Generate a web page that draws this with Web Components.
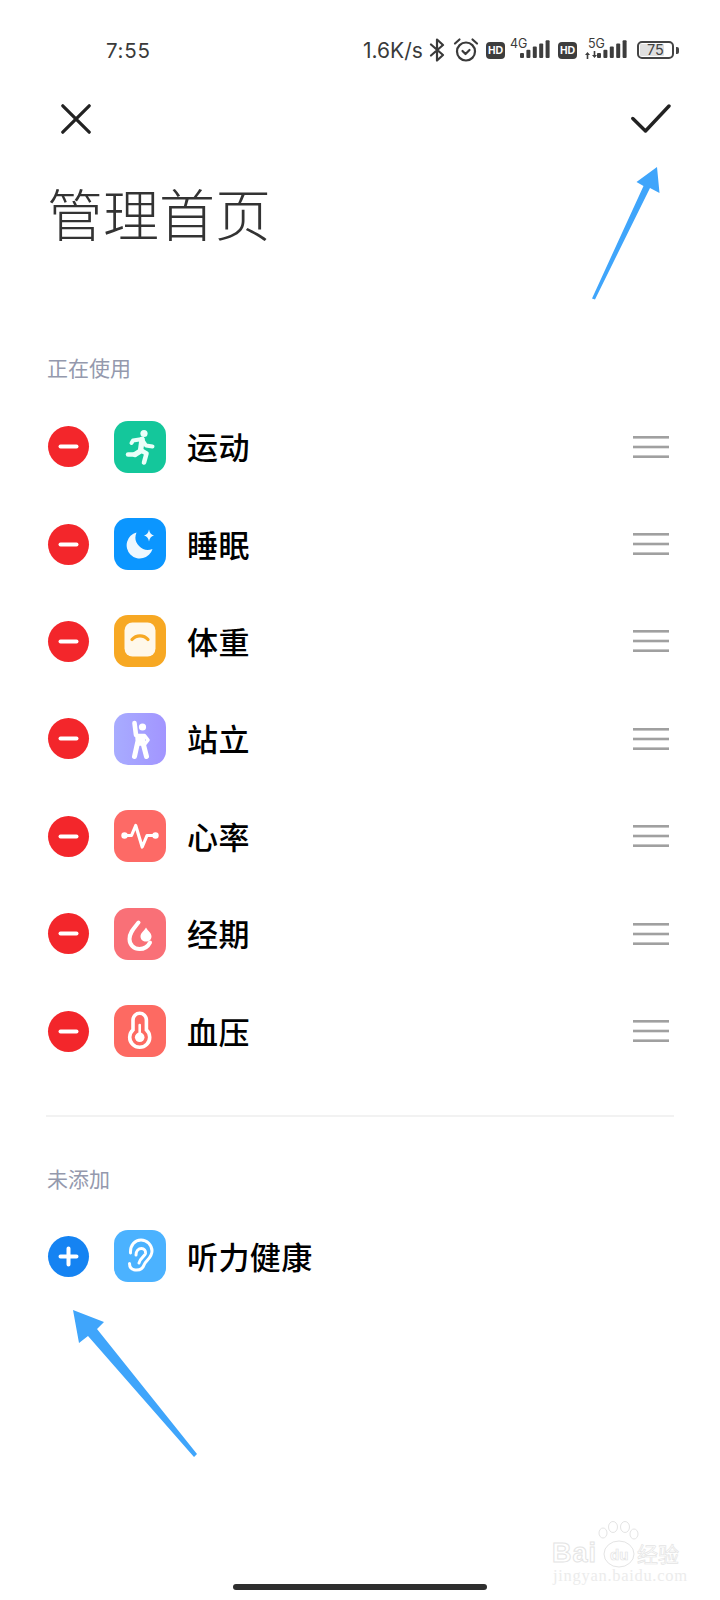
<!doctype html>
<html lang="zh">
<head>
<meta charset="utf-8">
<title>管理首页</title>
<style>
  html, body { margin: 0; padding: 0; background: #fff; }
  body { font-family: "Noto Sans CJK SC", "Noto Sans", sans-serif; }
</style>
</head>
<body>
<home-manager>
  <status-bar></status-bar>
  <nav-bar></nav-bar>
  <page-title>管理首页</page-title>
  <section-label style="--top: 70px">正在使用</section-label>
  <health-row kind="minus" icon="run">运动</health-row>
  <health-row kind="minus" icon="sleep">睡眠</health-row>
  <health-row kind="minus" icon="weight">体重</health-row>
  <health-row kind="minus" icon="stand">站立</health-row>
  <health-row kind="minus" icon="heart">心率</health-row>
  <health-row kind="minus" icon="period">经期</health-row>
  <health-row kind="minus" icon="pressure">血压</health-row>
  <list-divider></list-divider>
  <section-label style="--top: 32px">未添加</section-label>
  <health-row kind="plus" icon="ear">听力健康</health-row>
  <home-bar></home-bar>
  <note-arrows></note-arrows>
  <baidu-mark></baidu-mark>
</home-manager>

<script>
const CJK = `"Noto Sans CJK SC", "Noto Sans", sans-serif`;

const ICONS = {
  run: {
    bg: '#14c79b',
    svg: `<circle cx="30" cy="12.5" r="3.6" fill="#eafff9"/>
      <g fill="none" stroke="#eafff9" stroke-linecap="round" stroke-linejoin="round">
        <path d="M17.5 22 L19 19.5 L28.5 18 L26.5 29.5" stroke-width="4"/>
        <path d="M28 18.5 L26.5 30 L21 33.5" stroke-width="5.4"/>
        <path d="M21 33.5 L14 33.5" stroke-width="4.4"/>
        <path d="M29 20 L32 24.5 L38.5 25.5" stroke-width="4"/>
        <path d="M26.5 29 L32.5 32.5 L30 41.5" stroke-width="4.6"/>
      </g>`
  },
  sleep: {
    bg: '#0b96ff',
    svg: `<path d="M22.5 14.5 A13.2 13.2 0 1 0 38.5 31 A12.5 12.5 0 0 1 22.5 14.5 Z" fill="#eef8ff"/>
      <path d="M35 11.5 Q35.8 16.3 40 17.5 Q35.8 18.7 35 23.5 Q34.2 18.7 30 17.5 Q34.2 16.3 35 11.5 Z" fill="#eef8ff"/>`
  },
  weight: {
    bg: '#f7a823',
    svg: `<rect x="10.5" y="7.5" width="31" height="34" rx="8" fill="#fff8ea"/>
      <path d="M18 24.5 A10.5 10.5 0 0 1 34 24.5" fill="none" stroke="#f7a823" stroke-width="3.2" stroke-linecap="round"/>`
  },
  stand: {
    bg: 'linear-gradient(90deg,#a8acff,#a295ff)',
    svg: `<circle cx="28.5" cy="14" r="3.6" fill="#fff"/>
      <g fill="none" stroke="#fff" stroke-linecap="round" stroke-linejoin="round">
        <path d="M20.5 10 L22 22" stroke-width="4.6"/>
        <path d="M23 22.5 L30.5 22.5 L34 27 L30.5 31.5" stroke-width="3.6"/>
        <path d="M23 23 L29 23 L29.5 31 L23.5 31 Z" fill="#fff" stroke-width="3.6"/>
        <path d="M23.5 30 L20.5 43.5" stroke-width="5"/>
        <path d="M29 30 L32.5 43.5" stroke-width="5"/>
      </g>`
  },
  heart: {
    bg: '#fd6a66',
    svg: `<circle cx="10.5" cy="25.5" r="3.2" fill="#fff"/><circle cx="41.5" cy="25.5" r="3.2" fill="#fff"/>
      <path d="M11 25.5 H17.5 L21.7 15.5 L28.2 37 L33 25.5 H41" fill="none" stroke="#fff" stroke-width="3.2" stroke-linecap="round" stroke-linejoin="round"/>`
  },
  period: {
    bg: '#f97077',
    svg: `<path d="M24.5 14.5 C20 20 15.5 24.5 15.5 31 C15.5 37 20 41 25.5 41 C30 41 34 38.5 36 34.5" fill="none" stroke="#fff" stroke-width="4" stroke-linecap="round"/>
      <path d="M32 19.5 C34 23 37.5 25 37.5 28.5 C37.5 31.5 35 33.5 32 33.5 C29 33.5 26.5 31.5 26.5 28.5 C26.5 25 30 23 32 19.5 Z" fill="#fff"/>`
  },
  pressure: {
    bg: '#fd6a62',
    svg: `<path d="M19 15 a6.7 6.7 0 0 1 13.4 0 V24.9 A10 10 0 1 1 19 24.9 Z" fill="none" stroke="#fff" stroke-width="3.6"/>
      <circle cx="25.7" cy="32.3" r="4.8" fill="#fff"/>
      <path d="M25.7 20 V30" stroke="#fff" stroke-width="2.6" stroke-linecap="round"/>`
  },
  ear: {
    bg: '#4bb2ff',
    svg: `<g fill="none" stroke="#fff" stroke-width="3" stroke-linecap="round" stroke-linejoin="round">
        <path d="M16.5 23 C16 15 21 10 27 10 C33 10 38 15 38 21 C38 28 32 30 30 35 C28.5 39.5 25 40.5 21 40 C17.5 39.5 15.5 37 15.5 33.5"/>
        <path d="M22 25 C22 21 24.5 18.5 27.5 18.5 C30 18.5 32 20.5 31.5 23.5 C31 26 26 28 25 33"/>
      </g>`
  }
};

class HomeManager extends HTMLElement {
  connectedCallback() {
    this.attachShadow({ mode: 'open' }).innerHTML = `
      <style>
        :host { display: flex; flex-direction: column; position: relative; width: 720px; height: 1600px; overflow: hidden; background: #fff; }
      </style>
      <slot></slot>`;
  }
}

class StatusBar extends HTMLElement {
  connectedCallback() {
    const bars = [0, 1, 2, 3, 4].map(i => {
      const h = 5 + i * 3.2;
      return `<rect x="${i * 6.4}" y="${18 - h}" width="4" height="${h}" rx="1" fill="#3d3d3d"/>`;
    }).join('');
    this.attachShadow({ mode: 'open' }).innerHTML = `
      <style>
        :host { display: flex; align-items: center; box-sizing: border-box; height: 60px; margin-top: 20px; padding: 0 0 0 106px; color: #3a3a3a; font-family: Inter, "Noto Sans", sans-serif; }
        .time { font-size: 20.5px; letter-spacing: .7px; width: 257px; }
        .speed { font-size: 21px; width: 66px; }
        svg { display: block; flex: none; }
        .hd { flex: none; box-sizing: border-box; width: 19px; height: 17px; border-radius: 4px; background: #3d3d3d; color: #fff; font: 700 10.5px/17px "Liberation Sans", sans-serif; text-align: center; }
        .net { position: relative; flex: none; }
        .net span { position: absolute; top: 0; font: 400 12.5px/11px Inter, sans-serif; }
        .battery { position: relative; flex: none; box-sizing: border-box; width: 37px; height: 18px; border: 2px solid #444; border-radius: 5px; margin-left: 10px; }
        .battery i { position: absolute; left: 1px; top: 1px; bottom: 1px; width: 72%; background: #e0e0e0; border-radius: 1px; }
        .battery span { position: absolute; inset: 0; text-align: center; font: 400 14.5px/14px Inter, sans-serif; color: #444; }
        .nub { flex: none; width: 2.5px; height: 7px; margin-left: 2px; background: #444; border-radius: 0 2px 2px 0; }
      </style>
      <span class="time">7:55</span>
      <span class="speed">1.6K/s</span>
      <svg width="16" height="24" viewBox="0 0 16 24" fill="none" stroke="#3a3a3a" stroke-width="2.2" stroke-linejoin="round" stroke-linecap="round" style="margin-right:8px">
        <path d="M2 6.5 L14 17 L8 22.5 V1.5 L14 7 L2 17.5"/>
      </svg>
      <svg width="26" height="26" viewBox="0 0 26 26" fill="none" stroke="#3a3a3a" stroke-width="2.2" stroke-linecap="round" stroke-linejoin="round" style="margin-right:7px">
        <circle cx="13" cy="14.5" r="9"/>
        <path d="M9.5 14 L12.5 17 L16.5 13"/>
        <path d="M2 6.5 L6.5 2.5 M24 6.5 L19.5 2.5"/>
      </svg>
      <span class="hd">HD</span>
      <span class="net" style="width:41px;height:20px;margin:0 7px 0 5px">
        <span style="left:0;top:-2px">4G</span>
        <svg width="32" height="20" viewBox="0 0 32 20" style="position:absolute;left:10px;top:0">${bars}</svg>
      </span>
      <span class="hd">HD</span>
      <span class="net" style="width:42px;height:20px;margin-left:8px">
        <span style="left:3px;top:-2px">5G</span>
        <svg width="12" height="8" viewBox="0 0 12 8" style="position:absolute;left:0;top:11px" fill="#3d3d3d">
          <path d="M0 4 L2.5 1 L5 4 H3.3 V8 H1.7 V4 Z M7 4 L9.5 7 L12 4 H10.3 V0 H8.7 V4 Z"/>
        </svg>
        <svg width="32" height="20" viewBox="0 0 32 20" style="position:absolute;left:12px;top:0">${bars}</svg>
      </span>
      <span class="battery"><i></i><span>75</span></span>
      <span class="nub"></span>`;
  }
}

class NavBar extends HTMLElement {
  connectedCallback() {
    this.attachShadow({ mode: 'open' }).innerHTML = `
      <style>
        :host { display: flex; justify-content: space-between; align-items: center; height: 78px; padding: 0 49px 0 61px; }
        svg { display: block; }
      </style>
      <svg width="30" height="30" viewBox="0 0 30 30" fill="none" stroke="#222" stroke-width="3.2" stroke-linecap="round">
        <path d="M1.8 1.8 L28.2 28.2 M28.2 1.8 L1.8 28.2"/>
      </svg>
      <svg width="40" height="30" viewBox="0 0 40 30" fill="none" stroke="#222" stroke-width="3.4" stroke-linecap="round" stroke-linejoin="round">
        <path d="M1.8 14.5 L14.5 27 L38 2"/>
      </svg>`;
  }
}

class PageTitle extends HTMLElement {
  connectedCallback() {
    this.attachShadow({ mode: 'open' }).innerHTML = `
      <style>
        :host { display: block; height: 110px; padding-left: 47px; font: 300 56px/108px ${CJK}; color: #333; }
      </style>
      <slot></slot>`;
  }
}

class SectionLabel extends HTMLElement {
  connectedCallback() {
    this.attachShadow({ mode: 'open' }).innerHTML = `
      <style>
        :host { display: block; height: 60px; margin-top: var(--top, 0); padding-left: 47px; font: 400 21px/58px ${CJK}; color: #9499ad; }
      </style>
      <slot></slot>`;
  }
}

class HealthRow extends HTMLElement {
  connectedCallback() {
    const plus = this.getAttribute('kind') === 'plus';
    const icon = ICONS[this.getAttribute('icon')];
    this.attachShadow({ mode: 'open' }).innerHTML = `
      <style>
        :host { display: flex; align-items: center; height: 97.4px; padding: 0 51px 0 48px; font: 500 31px/1 ${CJK}; color: #000; letter-spacing: .4px; }
        :host([kind="plus"]) { margin-top: -1px; }
        .action { flex: none; width: 41px; height: 41px; border-radius: 50%; background: ${plus ? '#1583f2' : '#f3262b'}; }
        .action svg, .tile svg, .handle svg { display: block; }
        .tile { flex: none; width: 52px; height: 52px; margin: 0 21px 0 25px; border-radius: 14px; background: ${icon.bg}; }
        .name { flex: 1; padding-bottom: 2px; }
        .handle { flex: none; width: 36px; }
      </style>
      <span class="action">
        <svg width="41" height="41" viewBox="0 0 41 41" fill="none" stroke="#fff" stroke-width="4" stroke-linecap="round">
          <path d="M12.5 20.5 H28.5${plus ? ' M20.5 12.5 V28.5' : ''}"/>
        </svg>
      </span>
      <span class="tile"><svg width="52" height="52" viewBox="0 0 52 52">${icon.svg}</svg></span>
      <span class="name"><slot></slot></span>
      ${plus ? '' : `<span class="handle"><svg width="36" height="24" viewBox="0 0 36 24" fill="#a0a0a0"><rect y="1" width="36" height="2.6"/><rect y="10.7" width="36" height="2.6"/><rect y="20.4" width="36" height="2.6"/></svg></span>`}`;
  }
}

class ListDivider extends HTMLElement {
  connectedCallback() {
    this.attachShadow({ mode: 'open' }).innerHTML = `
      <style>
        :host { display: block; height: 2px; margin: 35px 46px 0; background: #f2f2f2; }
      </style>`;
  }
}

class HomeBar extends HTMLElement {
  connectedCallback() {
    this.attachShadow({ mode: 'open' }).innerHTML = `
      <style>
        :host { display: block; width: 254px; height: 6.5px; margin: auto auto 10px; border-radius: 4px; background: #2e2e2e; }
      </style>`;
  }
}

// the blue arrows are annotations drawn over the page
class NoteArrows extends HTMLElement {
  connectedCallback() {
    this.attachShadow({ mode: 'open' }).innerHTML = `
      <style>
        :host { position: absolute; inset: 0; pointer-events: none; }
        svg { display: block; }
      </style>
      <svg width="720" height="1600" viewBox="0 0 720 1600" fill="#3fa5fb">
        <polygon points="657,167 659.5,193 650,188 595,299.5 592,298.5 643.5,186 636.5,182"/>
        <polygon points="73,1310 104,1322 97,1329 197,1454 194,1457 88,1336 79,1343"/>
      </svg>`;
  }
}

class BaiduMark extends HTMLElement {
  connectedCallback() {
    this.attachShadow({ mode: 'open' }).innerHTML = `
      <style>
        :host { position: absolute; left: 552px; top: 1520px; width: 130px; height: 66px; color: #e2e2e2; pointer-events: none; }
        svg { position: absolute; left: 0; top: 0; }
        span { position: absolute; white-space: nowrap; }
        .bai { left: 0; top: 17px; font: 700 27px/32px "Liberation Sans", sans-serif; color: #fff; -webkit-text-stroke: 1px #e4e4e4; letter-spacing: 1px; }
        .du { left: 58px; top: 26px; font: 700 15px/18px "Liberation Sans", sans-serif; color: #fff; -webkit-text-stroke: .7px #e4e4e4; }
        .jy { left: 85px; top: 20px; font: 400 21px/26px ${CJK}; color: #fff; -webkit-text-stroke: .7px #e4e4e4; }
        .url { left: 1px; top: 47px; font: 400 16.5px/18px "Liberation Serif", serif; color: #ececec; letter-spacing: .7px; }
      </style>
      <svg width="130" height="66" viewBox="0 0 130 66" fill="#fff" stroke="#e4e4e4" stroke-width="1">
        <ellipse cx="51" cy="13" rx="4" ry="5"/>
        <ellipse cx="61" cy="7" rx="4.5" ry="5.5"/>
        <ellipse cx="73" cy="7" rx="4.5" ry="5.5"/>
        <ellipse cx="82" cy="14" rx="4" ry="5"/>
        <ellipse cx="67" cy="34" rx="15" ry="13"/>
      </svg>
      <span class="bai">Bai</span>
      <span class="du">du</span>
      <span class="jy">经验</span>
      <span class="url">jingyan.baidu.com</span>`;
  }
}

customElements.define('home-manager', HomeManager);
customElements.define('status-bar', StatusBar);
customElements.define('nav-bar', NavBar);
customElements.define('page-title', PageTitle);
customElements.define('section-label', SectionLabel);
customElements.define('health-row', HealthRow);
customElements.define('list-divider', ListDivider);
customElements.define('home-bar', HomeBar);
customElements.define('note-arrows', NoteArrows);
customElements.define('baidu-mark', BaiduMark);
</script>
</body>
</html>
